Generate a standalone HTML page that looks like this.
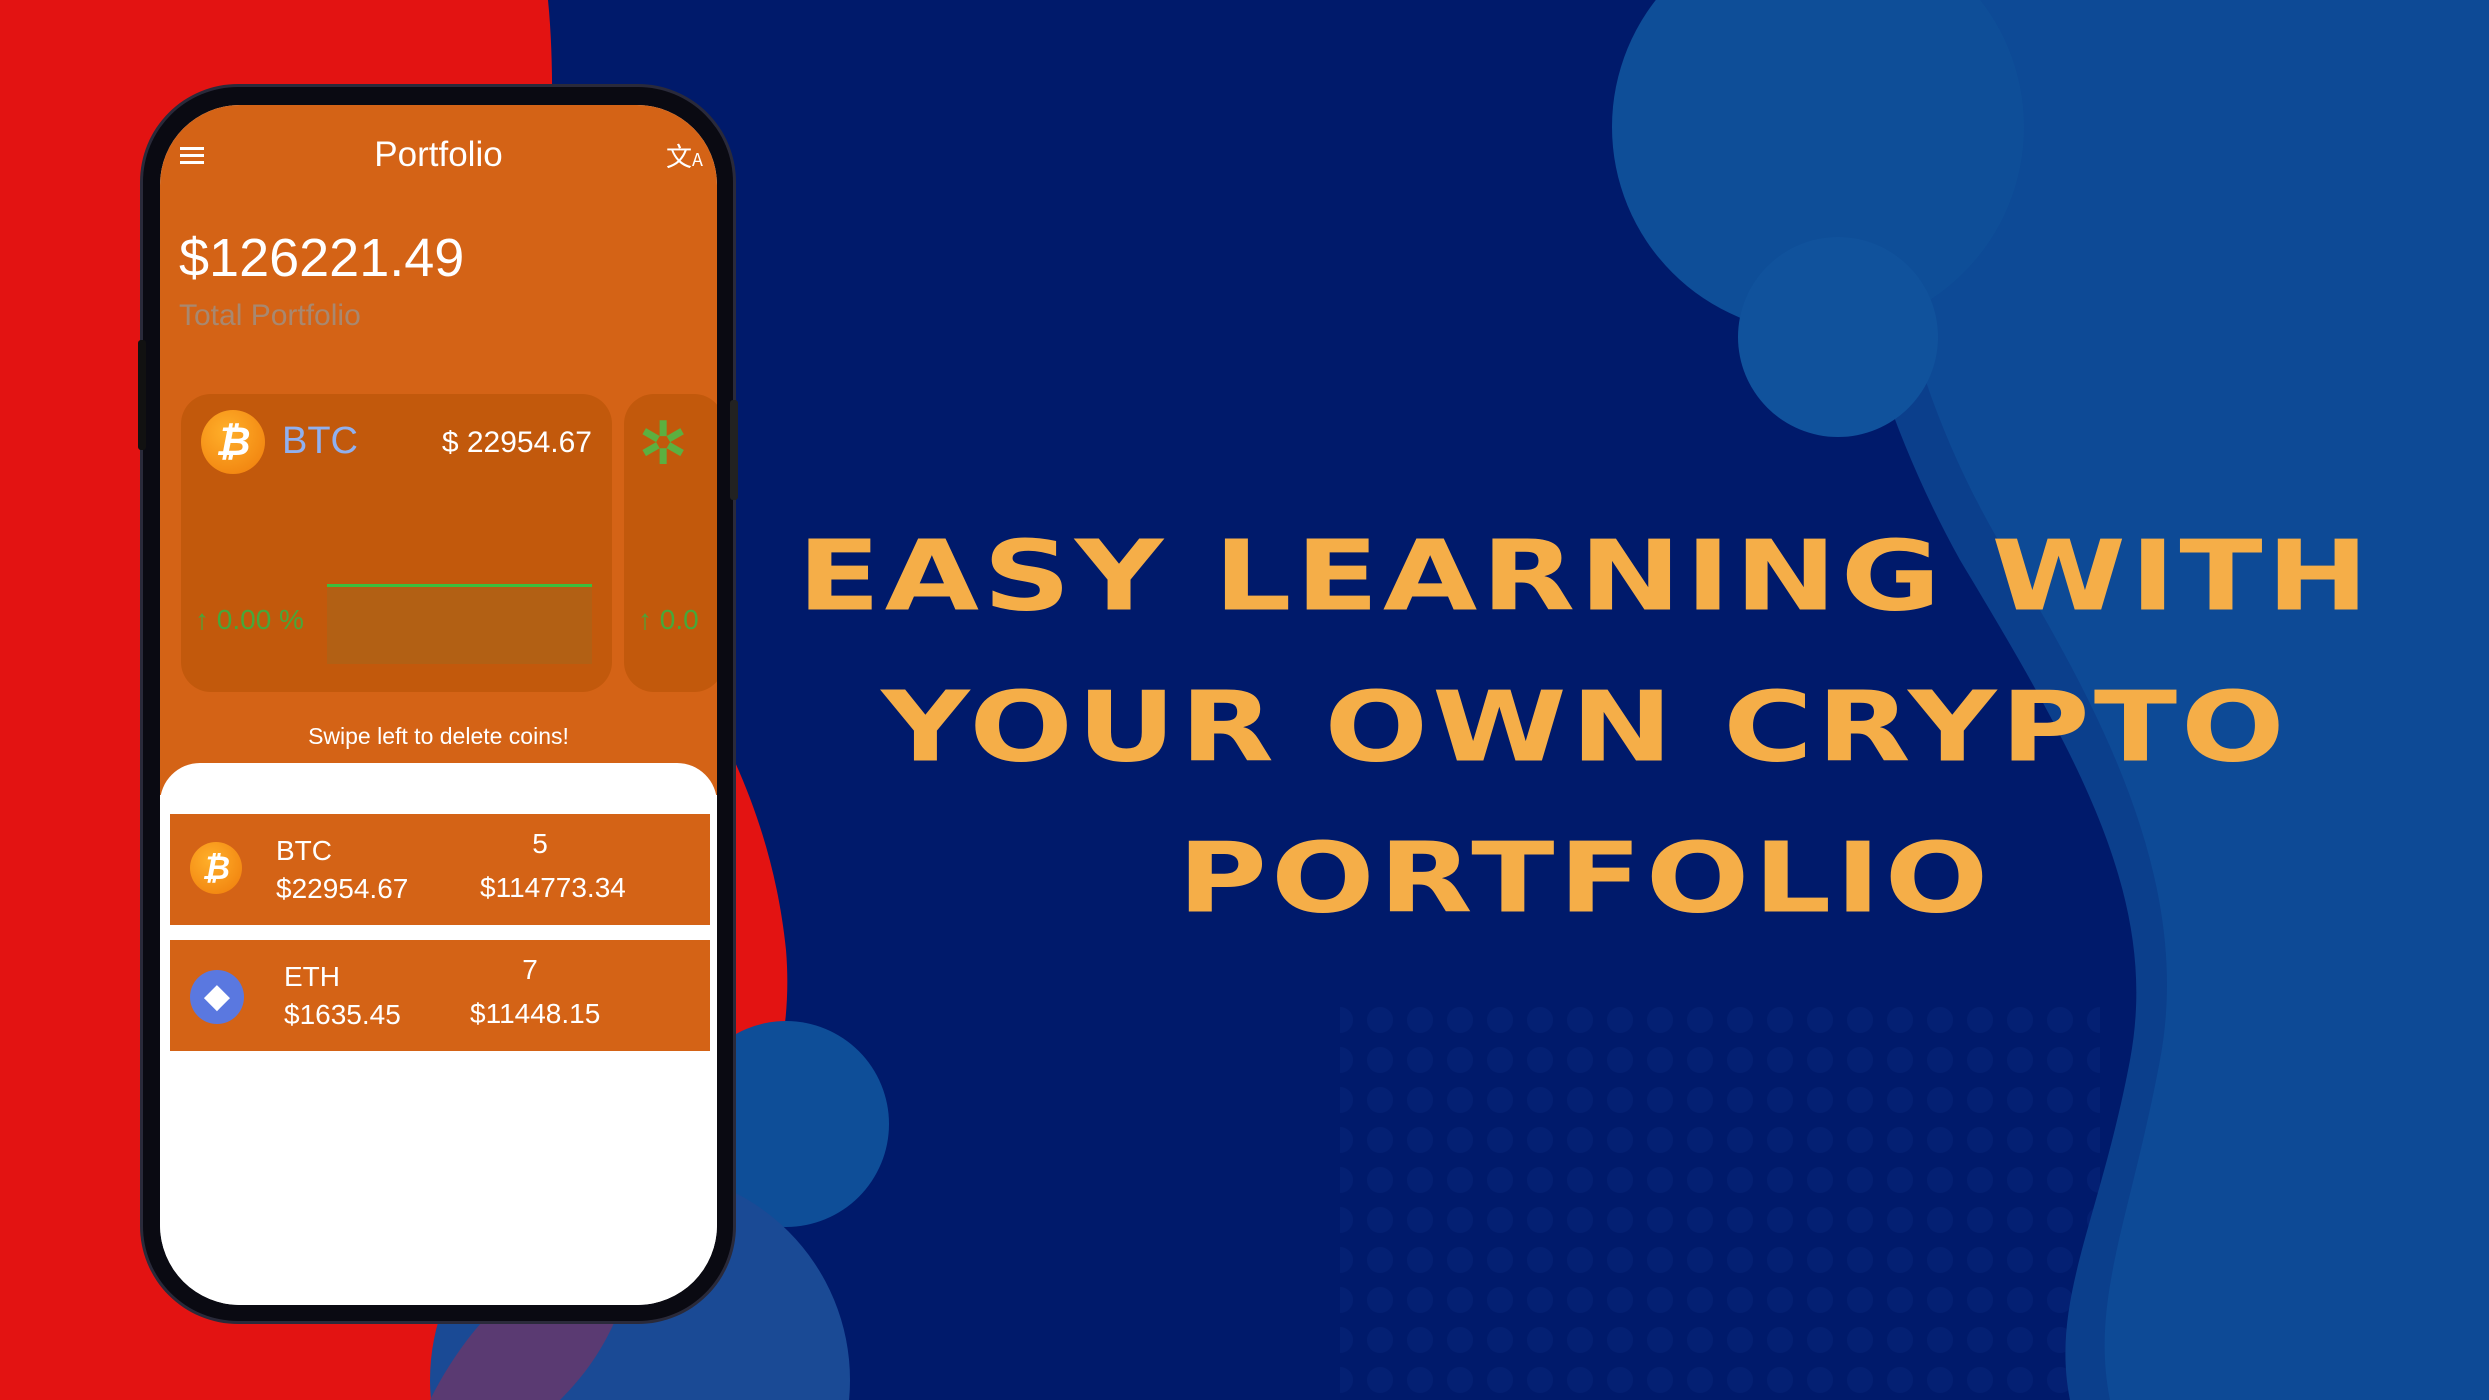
<!DOCTYPE html>
<html><head><meta charset="utf-8"><style>
*{margin:0;padding:0;box-sizing:border-box}
html,body{width:2489px;height:1400px;overflow:hidden}
body{position:relative;background:#001a6b;font-family:"Liberation Sans",sans-serif}
svg{display:block}
.abs{position:absolute}
.title{position:absolute;left:700px;width:1770px;height:125px;text-align:center;color:#f5ae48;font-family:"DejaVu Sans","Liberation Sans",sans-serif;font-weight:bold;font-size:122px;letter-spacing:4px;line-height:125px;transform:scaleY(0.8)}
</style></head><body>
<svg class="abs" style="left:0;top:0" width="2489" height="1400" viewBox="0 0 2489 1400">
  <defs>
    <pattern id="dots" width="40" height="40" patternUnits="userSpaceOnUse"><circle cx="20" cy="20" r="13" fill="#0a2a80" opacity="0.35"/></pattern>
  </defs>
  <rect width="2489" height="1400" fill="#001a6b"/>
  <rect x="1340" y="1000" width="760" height="400" fill="url(#dots)"/>
  <path d="M1794 0 C1830 200 1860 380 1960 560 C2080 760 2160 900 2130 1060 C2100 1220 2050 1300 2070 1400 L2489 1400 L2489 0Z" fill="#0b3f8c"/>
  <path d="M1880 0 C1870 200 1900 380 2010 560 C2120 740 2190 900 2160 1060 C2130 1220 2090 1300 2110 1400 L2489 1400 L2489 0Z" fill="#0d4a96"/>
  <circle cx="1818" cy="127" r="206" fill="#0e4e98"/>
  <circle cx="1838" cy="337" r="100" fill="#10529c"/>
  <path d="M0 0 L548 0 C560 120 540 250 560 380 C600 600 760 700 786 950 C800 1120 700 1240 600 1400 L0 1400Z" fill="#e31312"/>
  <circle cx="786" cy="1124" r="103" fill="#0e4e98"/>
  <circle cx="640" cy="1380" r="210" fill="#1a4a95"/>
  <path d="M430 1400 C480 1300 560 1240 640 1250 C620 1320 600 1360 560 1400Z" fill="#5a3a72"/>
</svg>

<div class="title" style="top:514px">EASY LEARNING WITH</div>
<div class="title" style="top:665px">YOUR OWN CRYPTO</div>
<div class="title" style="top:816px">PORTFOLIO</div>

<div class="abs" style="left:143px;top:87px;width:590px;height:1234px;border-radius:95px;background:#0a0a12;box-shadow:0 0 0 3px #2a2a3a"></div>
<div class="abs" style="left:138px;top:340px;width:8px;height:110px;background:#111;border-radius:3px"></div>
<div class="abs" style="left:730px;top:400px;width:8px;height:100px;background:#222;border-radius:3px"></div>
<div class="abs" style="left:160px;top:105px;width:557px;height:1200px;border-radius:80px;background:#fff;overflow:hidden">
  <div class="abs" style="left:0;top:0;width:557px;height:690px;background:#d46316"></div>
  <div class="abs" style="left:20px;top:42px;width:24px;height:3px;background:#fff;box-shadow:0 7px 0 #fff,0 14px 0 #fff"></div>
  <div class="abs" style="left:0;top:30px;width:557px;text-align:center;color:#fff;font-size:35px">Portfolio</div>
  <div class="abs" style="left:506px;top:32px;color:#fff;font-size:26px;font-family:'Noto Sans CJK SC',sans-serif">文<span style="font-size:18px">A</span></div>
  <div class="abs" style="left:19px;top:122px;color:#fff;font-size:54px">$126221.49</div>
  <div class="abs" style="left:19px;top:194px;color:#a88870;font-size:30px">Total Portfolio</div>
  <div class="abs" style="left:21px;top:289px;width:431px;height:298px;border-radius:30px;background:#c2590c">
    <div class="abs" style="left:20px;top:16px;width:64px;height:64px;border-radius:50%;background:radial-gradient(circle at 40% 35%,#ffb02a,#ef7b0a);color:#fff;font-weight:bold;font-style:italic;font-size:40px;text-align:center;line-height:64px">₿</div>
    <div class="abs" style="left:101px;top:26px;color:#8fb0f0;font-size:38px">BTC</div>
    <div class="abs" style="right:20px;top:32px;color:#fff;font-size:30px">$ 22954.67</div>
    <div class="abs" style="left:146px;top:190px;width:265px;height:80px;background:#b26014;border-top:3px solid #3cbf3c"></div>
    <div class="abs" style="left:14px;top:210px;color:#46a83a;font-size:28px">↑ 0.00 %</div>
  </div>
  <div class="abs" style="left:464px;top:289px;width:100px;height:298px;border-radius:30px;background:#c2590c">
    <div class="abs" style="left:14px;top:20px;color:#5cb040;font-size:60px;line-height:1">✲</div>
    <div class="abs" style="left:14px;top:210px;color:#46a83a;font-size:28px">↑ 0.0</div>
  </div>
  <div class="abs" style="left:0;top:618px;width:557px;text-align:center;color:#fff;font-size:23px">Swipe left to delete coins!</div>
  <div class="abs" style="left:0;top:658px;width:557px;height:542px;background:#fff;border-radius:40px 40px 0 0"></div>
  <div class="abs" style="left:10px;top:709px;width:540px;height:111px;background:#d46316">
    <div class="abs" style="left:20px;top:28px;width:52px;height:52px;border-radius:50%;background:radial-gradient(circle at 40% 35%,#ffb02a,#ef7b0a);color:#fff;font-weight:bold;font-style:italic;font-size:32px;text-align:center;line-height:52px">₿</div>
    <div class="abs" style="left:106px;top:18px;color:#fff;font-size:28px;line-height:38px">BTC<br>$22954.67</div>
    <div class="abs" style="left:310px;top:8px;width:120px;text-align:center;color:#fff;font-size:28px;line-height:44px">5<br>$114773.34</div>
  </div>
  <div class="abs" style="left:10px;top:835px;width:540px;height:111px;background:#d46316">
    <div class="abs" style="left:20px;top:30px;width:54px;height:54px;border-radius:50%;background:#5a78e0;color:#fff;font-size:34px;text-align:center;line-height:52px">◆</div>
    <div class="abs" style="left:114px;top:18px;color:#fff;font-size:28px;line-height:38px">ETH<br>$1635.45</div>
    <div class="abs" style="left:300px;top:8px;width:120px;text-align:center;color:#fff;font-size:28px;line-height:44px">7<br>$11448.15</div>
  </div>
</div>
</body></html>
